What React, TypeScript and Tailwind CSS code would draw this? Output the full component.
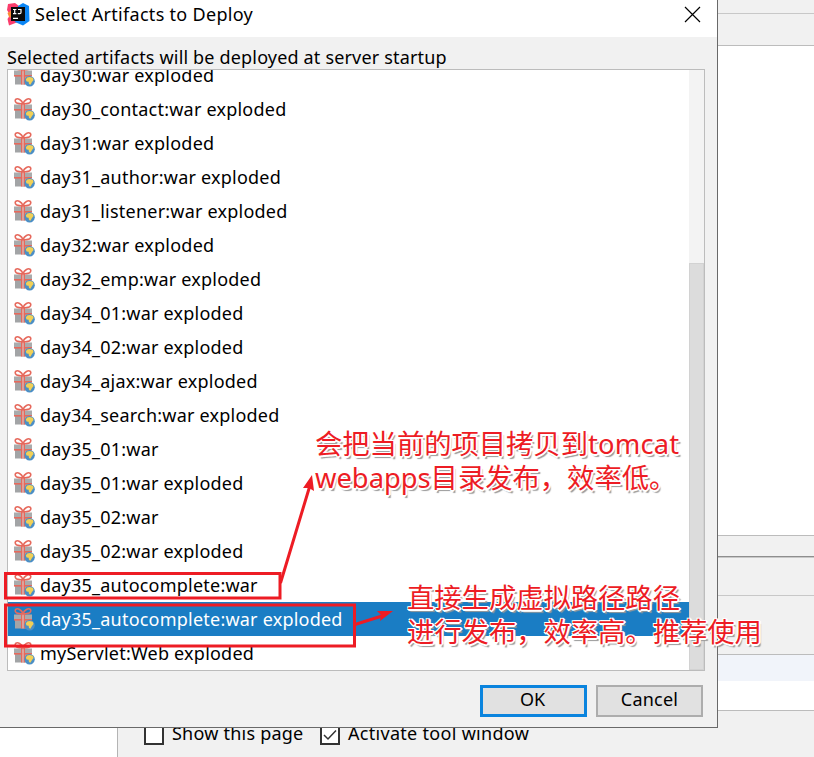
import React from "react";

const artifacts = [
  "day30:war exploded",
  "day30_contact:war exploded",
  "day31:war exploded",
  "day31_author:war exploded",
  "day31_listener:war exploded",
  "day32:war exploded",
  "day32_emp:war exploded",
  "day34_01:war exploded",
  "day34_02:war exploded",
  "day34_ajax:war exploded",
  "day34_search:war exploded",
  "day35_01:war",
  "day35_01:war exploded",
  "day35_02:war",
  "day35_02:war exploded",
  "day35_autocomplete:war",
  "day35_autocomplete:war exploded",
  "myServlet:Web exploded",
];
const selected = 16;

function GiftIcon() {
  return (
    <svg width="22" height="24" viewBox="0 0 22 24" className="shrink-0">
      <rect x="1" y="7.5" width="18" height="4.5" fill="#a9abac" />
      <rect x="2" y="13" width="16" height="8.5" fill="#a2a4a6" />
      <rect x="1" y="12" width="18" height="1.6" fill="#e6695c" />
      <rect x="8" y="7" width="1.3" height="14.5" fill="#e6695c" />
      <rect x="10.7" y="7" width="1.3" height="14.5" fill="#e6695c" />
      <rect x="9.3" y="7" width="1.4" height="14.5" fill="#eba79f" />
      <path d="M10 6.6C8.4 2.6 4.8 1 2.9 2.2C1.4 3.4 2.4 6 5 6.4C6.8 6.8 8.6 6.8 10 6.6C11.4 6.8 13.2 6.8 15 6.4C17.6 6 18.6 3.4 17.1 2.2C15.2 1 11.6 2.6 10 6.6Z" fill="none" stroke="#e6695c" strokeWidth="1.6" />
      <circle cx="16.6" cy="18.2" r="5.2" fill="#4c8fc6" />
      <path d="M12.8 16.5L14.2 14.6L16.8 14L19.8 14.8L20.6 17L19 19L17.4 21.8L16 21L15.6 18.8L13.6 18.4Z" fill="#f1d057" />
    </svg>
  );
}

function IdeaLogo() {
  return (
    <svg width="24" height="24" viewBox="0 0 24 24" className="shrink-0">
      <path d="M2 2L9 1L13 4L12 20L3 23.5L1.5 17L4 13L1 8Z" fill="#fb3d6c" />
      <path d="M1.5 11L6 8V16L3 15Z" fill="#fb8a33" />
      <path d="M12 4L17 1L23 4L23.5 19L17 23.5L9 20Z" fill="#0b86f5" />
      <rect x="5" y="5" width="14" height="14" fill="#0b0b0b" />
      <path d="M7 7.5H10.4M8.7 7.5V11.6M7 11.6H10.4M12 7.5H15V10.4Q15 11.6 13.8 11.6H11.8M7 16.3H12" fill="none" stroke="#fff" strokeWidth="1.2" />
    </svg>
  );
}

export default function App() {
  return (
    <div className="relative h-[757px] w-[814px] overflow-hidden bg-[#f1f1f1] font-['Noto_Sans','Noto_Sans_CJK_SC',sans-serif] text-[18px] tracking-[0.22px] text-black">
      <div className="ml-[718px] flex h-[728px] flex-col">
        <div className="h-[14px] border-b border-[#c8c8c8]" />
        <div className="h-8 border-b border-[#bcbcbc]" />
        <div className="h-[490px] border-b border-[#bcbcbc] bg-white" />
        <div className="h-[21px] border-b border-[#8e8e8e]" />
        <div className="h-[39px] border-t border-b border-[#c8c8c8]" />
        <div className="h-[59px] border-b border-[#bcbcbc]" />
        <div className="h-[26px] bg-[#f1f4fa]" />
        <div className="h-[30px] border-b border-[#bcbcbc] bg-white" />
      </div>
      <div className="flex h-[29px]">
        <div className="w-[118px] border-r border-[#b4b4b4] bg-white" />
        <div className="-mt-[3px] flex h-5 items-center pl-[26px]">
          <span className="h-5 w-5 border-2 border-[#333] bg-white" />
          <span className="ml-2 w-[148px] -translate-y-[2px] whitespace-nowrap">Show this page</span>
          <span className="h-5 w-5 border-2 border-[#333] bg-white">
            <svg width="16" height="16" viewBox="0 0 16 16">
              <path d="M2 8L6 12L14 3.5" fill="none" stroke="#333" strokeWidth="1.5" />
            </svg>
          </span>
          <span className="ml-2 -translate-y-[2px] tracking-[0.3px] whitespace-nowrap">Activate tool window</span>
        </div>
      </div>

      <div className="absolute top-0 left-0 flex h-[728px] w-[718px] flex-col border-r border-b border-[#696969] bg-[#f1f1f1]">
        <div className="flex h-[37px] items-start bg-white pt-[2px] pl-[6px]">
          <IdeaLogo />
          <span className="ml-[5px] flex-1 leading-[25px] tracking-[0.3px]">Select Artifacts to Deploy</span>
          <svg width="17" height="17" viewBox="0 0 17 17" className="mt-[4px] mr-[16px]">
            <path d="M1 1L16 16M16 1L1 16" stroke="#000" strokeWidth="1.2" />
          </svg>
        </div>
        <div className="h-8 pl-[7px] leading-[41px] tracking-[0.17px]">Selected artifacts will be deployed at server startup</div>
        <div className="ml-[7px] flex h-[602px] w-[698px] border border-[#bcbcbc] bg-white">
          <div className="flex h-[600px] flex-1 flex-col justify-end overflow-hidden">
            {artifacts.map((name, i) => (
              <div
                key={name}
                className={
                  i === selected
                    ? "flex h-[34px] shrink-0 items-center bg-[#1a7dc4] pl-[5px] text-white"
                    : "flex h-[34px] shrink-0 items-center pl-[5px]"
                }
              >
                <GiftIcon />
                <span className="ml-[5px] leading-[34px] whitespace-nowrap">{name}</span>
              </div>
            ))}
          </div>
          <div className="flex w-[15px] flex-col bg-[#f3f3f3] pt-[193px]">
            <div className="flex-1 border border-[#d2d2d2] bg-[#dcdcdc]" />
          </div>
        </div>
        <div className="flex gap-[9px] pt-[14px] pl-[480px]">
          <div className="h-8 w-[107px] border-3 border-[#0a84de] bg-[#e1e1e1] pr-[2px] text-center leading-[22px] tracking-normal">OK</div>
          <div className="h-8 w-[107px] border-2 border-[#adadad] bg-[#e1e1e1] text-center leading-[24px]">Cancel</div>
        </div>
      </div>

      <svg width="814" height="757" className="absolute top-0 left-0">
        <g fill="none" stroke="#ed1c24" strokeWidth="3">
          <rect x="5.5" y="573.5" width="274.5" height="24.5" />
          <rect x="5.5" y="605" width="349" height="41" />
          <path d="M280.5 583L309.5 487M355 624.5L382 616" />
        </g>
        <path d="M312 475L314 491L309 488L303 488Z" fill="#ed1c24" />
        <path d="M393 611L377 611L381 615L380 621Z" fill="#ed1c24" />
      </svg>
      <div className="absolute top-[427px] left-[315px] text-[27.3px] leading-[34px] tracking-normal whitespace-nowrap text-[#ed1c24] [text-shadow:-1px_-1px_0_#fff,1px_-1px_0_#fff,-1px_1px_0_#fff,1px_1px_0_#fff,0_2px_0_#fff,2px_0_0_#fff,2px_3px_1px_#999]">
        <div>会把当前的项目拷贝到<span className="tracking-[0.2px]">tomcat</span></div>
        <div>webapps目录发布，效率低。</div>
      </div>
      <div className="absolute top-[581px] left-[407px] text-[27.3px] leading-[34px] tracking-normal whitespace-nowrap text-[#ed1c24] [text-shadow:-1px_-1px_0_#fff,1px_-1px_0_#fff,-1px_1px_0_#fff,1px_1px_0_#fff,0_2px_0_#fff,2px_0_0_#fff,2px_3px_1px_#999]">
        <div>直接生成虚拟路径路径</div>
        <div>进行发布，效率高。推荐使用</div>
      </div>
    </div>
  );
}
